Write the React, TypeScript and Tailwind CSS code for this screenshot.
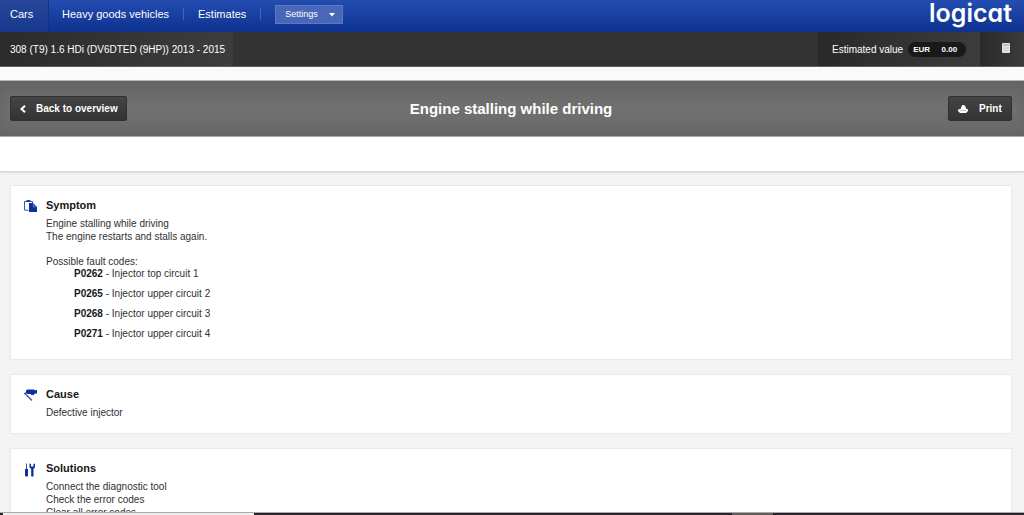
import type { ReactNode } from "react";

const faultCodes = [
  { code: "P0262", text: "Injector top circuit 1" },
  { code: "P0265", text: "Injector upper circuit 2" },
  { code: "P0268", text: "Injector upper circuit 3" },
  { code: "P0271", text: "Injector upper circuit 4" },
];

function ClipboardIcon() {
  return (
    <svg viewBox="0 0 13 12" className="h-3 w-[13px]" aria-hidden="true">
      <path d="M.5 10V1.5h8V4M.5 10.2h4" fill="none" stroke="#3e55b0" />
      <path d="M2.5 0h4v2h-4z" fill="#2742a8" />
      <path d="M5 3h4l4 4v5H5z" fill="#0c2fa0" />
      <path d="M9.3 3.4v3.3h3.3" fill="none" stroke="#8191d0" strokeWidth=".8" />
    </svg>
  );
}

function InjectorIcon() {
  return (
    <svg viewBox="0 0 13 12" className="h-3 w-[13px]" aria-hidden="true">
      <path d="M2 1.5 3.500 .5h6.500l.8.8 2.200-.3v3.500h-2l-1.500 1.500H7.500L6.500 5H3.500L2 4z" fill="#0c2fa0" />
      <path d="m.5 4 7.500 7.500" stroke="#4058b4" strokeWidth="1.500" />
      <path d="M.3 4.800 3 3" stroke="#0c2fa0" />
    </svg>
  );
}

function ToolsIcon() {
  return (
    <svg viewBox="0 0 12 14" className="h-[14px] w-3" aria-hidden="true">
      <path d="M2.500 .5v6" stroke="#3e55b0" />
      <path d="M1 6h3v7q-1.500 1-3 0z" fill="#0c2fa0" />
      <path d="M5.500.5 7 1v2.500h2.500V1l1.500-.5v3.700L9.500 6v7.500H7.200V6L5.500 4.200z" fill="#0c2fa0" />
    </svg>
  );
}

function Card({ icon, title, className, children }: { icon: ReactNode; title: string; className: string; children: ReactNode }) {
  return (
    <section className={`flex shrink-0 border border-[#e9e9e9] bg-white pl-[13px] pt-[11px] text-[10px] leading-[13px] text-[#303030] ${className}`}>
      <div className="flex w-[22px] shrink-0 pt-[3px]">{icon}</div>
      <div>
        <h2 className="mb-1 text-[11px] font-bold leading-4 text-[#171717]">{title}</h2>
        {children}
      </div>
    </section>
  );
}

const buttonStyle =
  "flex h-[25px] items-center rounded-[2px] border border-[#303030] bg-gradient-to-b from-[#454545] to-[#333] text-[10px] font-bold text-white";

export default function App() {
  return (
    <div className="flex h-screen flex-col overflow-hidden bg-[#f3f3f3] font-['Liberation_Sans',Arial,sans-serif]">
      <header className="flex h-8 shrink-0 items-center justify-between bg-gradient-to-b from-[#244db1] to-[#0d318f] pr-3">
        <nav className="flex h-full items-center text-[11px] text-white">
          <a href="#cars" className="flex h-full w-[49px] items-center border-r border-[#133180] bg-gradient-to-b from-[#28479b] to-[#17388f] pb-1 pl-[10px]">Cars</a>
          <a href="#heavy" className="pb-1 pl-[13px] pr-[14px]">Heavy goods vehicles</a>
          <span className="mb-1 h-3 w-px bg-[#4563b4]" />
          <a href="#estimates" className="pb-1 pl-[14px] pr-[14px]">Estimates</a>
          <span className="mb-1 h-3 w-px bg-[#4563b4]" />
          <button className="mb-1 ml-[14px] flex h-[19px] w-[68px] items-center justify-between border border-[#5b78c4] bg-[#4867b9] pl-[9px] pr-[7px] pt-px text-[9px]">
            Settings
            <svg viewBox="0 0 6 4" className="h-1 w-[6px]" aria-hidden="true"><path d="M0 0h6L3 3.500z" fill="white" /></svg>
          </button>
        </nav>
        <a href="#home" className="pb-[6px] font-['Inter',sans-serif] text-[25px] font-semibold leading-[26px] text-white [font-feature-settings:'cv11']">logicat</a>
      </header>

      <div className="flex h-[35px] shrink-0 items-stretch border-b border-[#625d5d] bg-[#333] text-[10px] text-white">
        <div className="flex w-[233px] items-center bg-gradient-to-r from-[#2b2b2b] to-[#3d3d3d] pl-[10px]">308 (T9) 1.6 HDi (DV6DTED (9HP)) 2013 - 2015</div>
        <div className="ml-auto flex w-[162px] items-center bg-gradient-to-r from-[#292929] to-[#3c3c3c] pl-[14px]">
          Estimated value
          <span className="ml-[5px] flex h-[15px] w-[58px] items-center justify-between rounded-full bg-[#191919] pl-[5px] pr-[9px] pt-px text-[8px] font-bold"><span>EUR</span><span>0.00</span></span>
        </div>
        <button aria-label="Calculator" className="flex w-11 items-center justify-center bg-gradient-to-r from-[#2a2a2a] to-[#3b3b3b] pb-[2px] pl-2">
          <svg viewBox="0 0 8 10" className="h-[10px] w-2" aria-hidden="true">
            <rect width="8" height="10" rx=".7" fill="#e2e2e2" />
            <path d="M1 2h6" stroke="#999" />
            <path d="M1 5h6M1 7h6M3 4v5M5 4v5" stroke="#cfcfcf" strokeWidth=".6" />
          </svg>
        </button>
      </div>

      <div className="h-[14px] shrink-0 border-b border-[#b8b8b8] bg-[#fafafa]" />
      <div className="grid h-14 shrink-0 grid-cols-[1fr_auto_1fr] items-center border-b border-[#a5a5a5] bg-gradient-to-b from-[#666] via-[#707070] to-[#696969] pl-[10px] pr-3 shadow-[inset_0_0_12px_#646464]">
        <button className={`${buttonStyle} w-[117px] justify-self-start pl-[9px]`}>
          <svg viewBox="0 0 6 8" className="mr-[10px] h-2 w-[6px]" aria-hidden="true"><path d="M5 .8 1.500 4 5 7.200" fill="none" stroke="white" strokeWidth="2" /></svg>
          Back to overview
        </button>
        <h1 className="pt-[2px] text-[15px] font-bold text-white">Engine stalling while driving</h1>
        <button className={`${buttonStyle} w-16 justify-self-end pl-[9px]`}>
          <svg viewBox="0 0 10 8" className="mr-[11px] h-2 w-[10px]" aria-hidden="true">
            <path d="M2.500 4 3.500 1.500 4.500 0h1.500l1.500 1.500L8 3.500 10 4.500v1.500L8 8H2L0 6V4.500z" fill="white" />
            <path d="M2 5.500h6" stroke="#b5b5b5" strokeWidth=".8" />
          </svg>
          Print
        </button>
      </div>
      <div className="h-[35px] shrink-0 border-b border-[#d8d8d8] bg-white shadow-[0_1px_2px_#ddd]" />

      <main className="flex min-h-0 flex-1 flex-col gap-[14px] overflow-hidden pl-[10px] pr-3 pt-[13px]">
        <Card icon={<ClipboardIcon />} title="Symptom" className="pb-[11px]">
          <p>Engine stalling while driving<br />The engine restarts and stalls again.</p>
          <p className="mt-3">Possible fault codes:</p>
          <ul className="ml-7">
            {faultCodes.map(({ code, text }) => (
              <li key={code} className="h-5 leading-3"><strong className="text-[#171717]">{code}</strong> - {text}</li>
            ))}
          </ul>
        </Card>
        <Card icon={<InjectorIcon />} title="Cause" className="pb-[14px]">
          <p>Defective injector</p>
        </Card>
        <Card icon={<ToolsIcon />} title="Solutions" className="pb-[14px]">
          <p>Connect the diagnostic tool<br />Check the error codes<br />Clear all error codes</p>
        </Card>
      </main>
      <footer className="flex h-[3px] shrink-0 border-t border-[#aaa] bg-[#28252a]">
        <div className="ml-[3px] w-[24.5%] bg-[#eee]" />
        <div className="ml-[46.7%] w-[4%] bg-[#62605f]" />
      </footer>
    </div>
  );
}
